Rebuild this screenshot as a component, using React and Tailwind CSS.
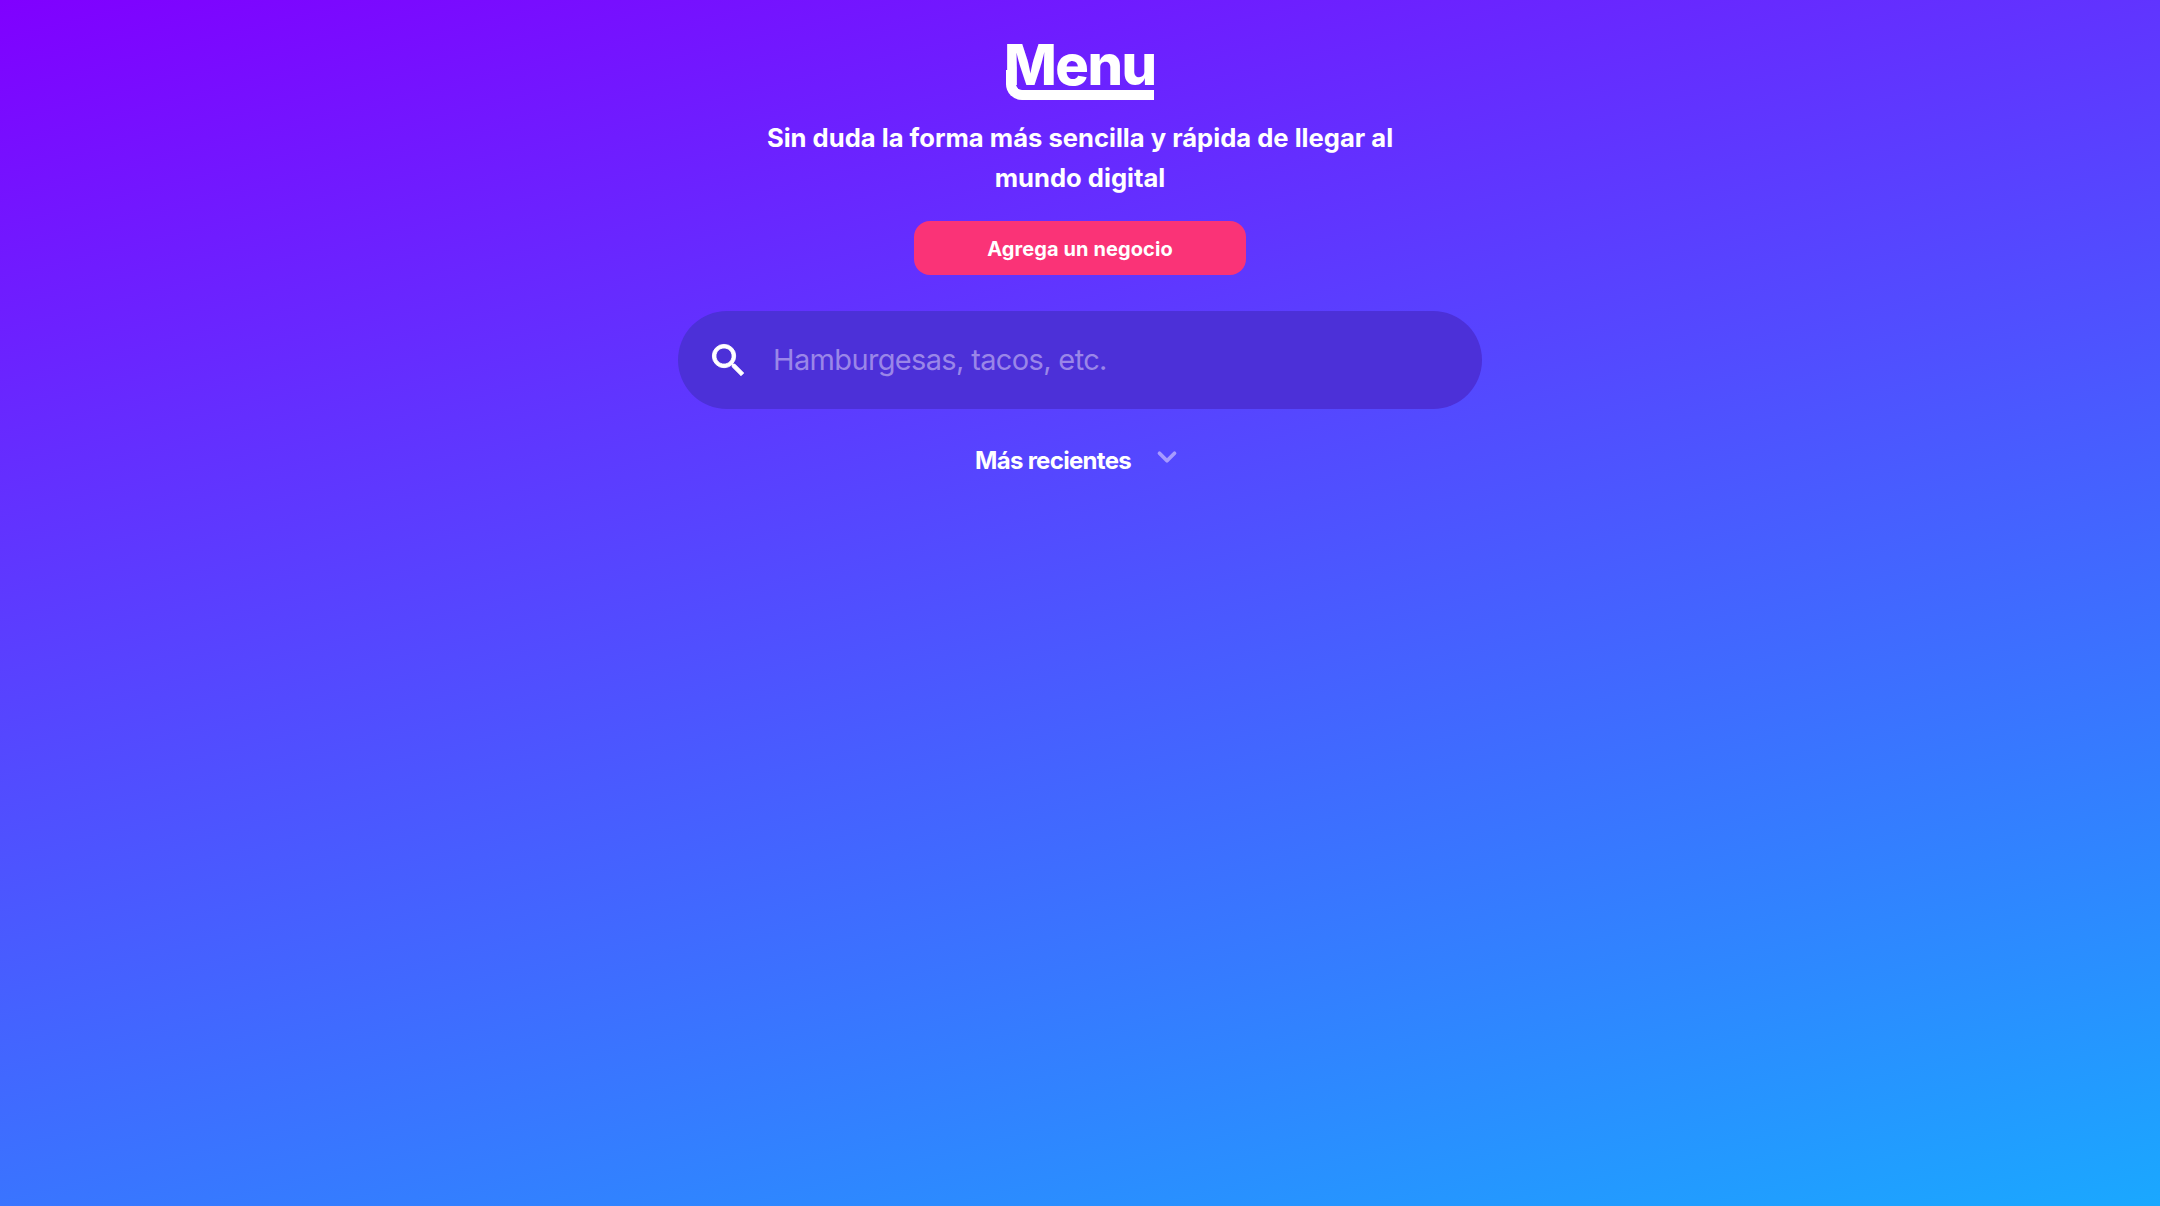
import { ChevronDown } from "lucide-react";

export default function App() {
  return (
    <div className="min-h-[1206px] bg-[linear-gradient(166deg,#8000ff,#1aa8ff)] flex flex-col items-center font-['Inter',sans-serif] text-white">
      {/* Logo */}
      <div className="relative mt-[31px] h-[74px] w-[148px]">
        <span className="absolute left-[-2px] top-[-3px] text-[56px] leading-[74px] font-extrabold tracking-[-1.5px]">Menu</span>
        <div className="absolute left-0 top-[39px] h-[30px] w-[148px] border-l-[10px] border-b-[10px] border-white rounded-bl-[16px]"></div>
      </div>

      <p className="mt-[13px] w-[660px] text-center text-[25.6px] leading-[40px] font-bold">
        Sin duda la forma más sencilla y rápida de llegar al mundo digital
      </p>

      <button className="mt-[23px] h-[54px] w-[332px] rounded-[16px] bg-[#fa3377] pt-[1px] text-[20px] font-bold tracking-[0.1px] text-white">
        Agrega un negocio
      </button>

      {/* Search */}
      <div className="mt-[36px] h-[98px] w-[804px] rounded-[49px] bg-[#4c30d8] flex items-center pl-[29px]">
        <svg viewBox="0 0 24 24" className="h-[43px] w-[43px] text-white fill-current stroke-current stroke-[0.5px]">
          <path d="M15.5 14h-.79l-.28-.27A6.471 6.471 0 0 0 16 9.5 6.5 6.5 0 1 0 9.5 16c1.61 0 3.09-.59 4.23-1.57l.27.28v.79l5 4.99L20.49 19l-4.99-5zm-6 0C7.01 14 5 11.99 5 9.5S7.01 5 9.5 5 14 7.01 14 9.5 11.99 14 9.5 14z" />
        </svg>
        <input
          placeholder="Hamburgesas, tacos, etc."
          className="ml-[23px] flex-1 bg-transparent outline-none text-[29px] tracking-[-0.65px] text-white placeholder:text-[#9a86e8]"
        />
      </div>

      <div className="mt-[36px] flex items-start">
        <span className="text-[24px] leading-[32px] font-bold tracking-[-0.7px]">Más recientes</span>
        <ChevronDown size={30} strokeWidth={3} className="ml-[21px] mr-[3px] mt-[-3px] text-[#a79bff]" />
      </div>
    </div>
  );
}
